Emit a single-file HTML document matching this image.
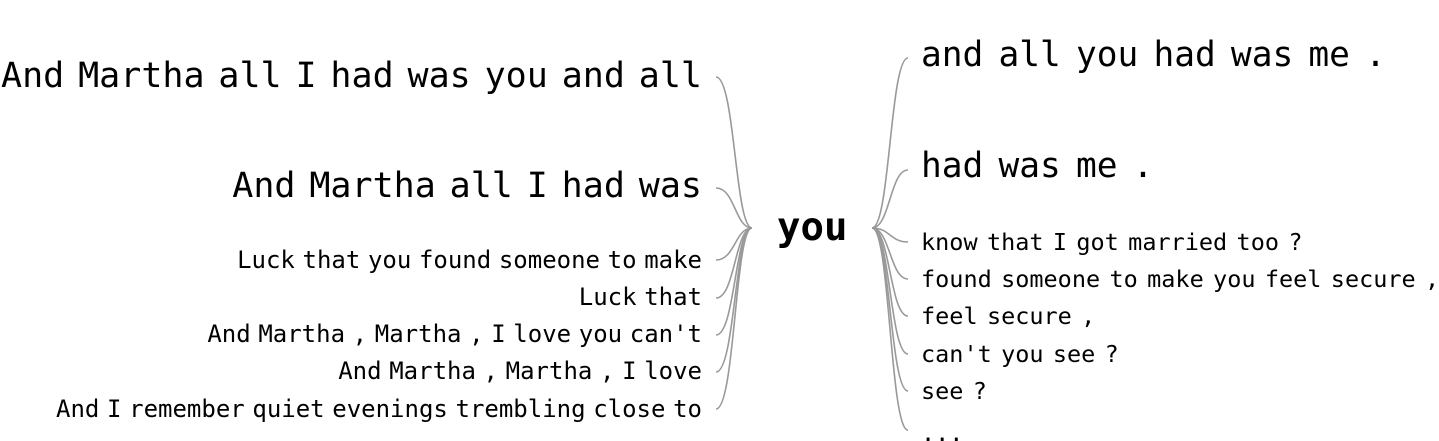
<!DOCTYPE html>
<html><head><meta charset="utf-8"><style>
html,body{margin:0;padding:0;background:#fff;width:1439px;height:441px;overflow:hidden}
svg{display:block}
text{font-family:"DejaVu Sans Mono","Liberation Mono",monospace;fill:#000}
.b{font-size:35px;word-spacing:-7.2px}
.s{font-size:24px;word-spacing:-6.8px}
.rb{font-size:34.5px;word-spacing:-5.6px}
.rs{font-size:23.5px;word-spacing:-4.8px}
path{fill:none;stroke:#999;stroke-width:1.6}
</style></head><body>
<svg width="1439" height="441" viewBox="0 0 1439 441">
<g>
<path d="M752 228 C735 228,735 77,716 77"/>
<path d="M752 228 C735 228,735 188,716 188"/>
<path d="M752 228 C735 228,735 260,716 260"/>
<path d="M752 228 C735 228,735 298,716 298"/>
<path d="M752 228 C735 228,735 335,716 335"/>
<path d="M752 228 C735 228,735 372,716 372"/>
<path d="M752 228 C735 228,735 409,716 409"/>
<path d="M872 228 C890 228,890 58,908 58"/>
<path d="M872 228 C890 228,890 170,908 170"/>
<path d="M872 228 C890 228,890 242,908 242"/>
<path d="M872 228 C890 228,890 279,908 279"/>
<path d="M872 228 C890 228,890 316,908 316"/>
<path d="M872 228 C890 228,890 354,908 354"/>
<path d="M872 228 C890 228,890 391,908 391"/>
<path d="M872 228 C890 228,890 430,908 430"/>
</g>
<g text-anchor="end">
<text x="702" y="87" class="b">And Martha all I had was you and all</text>
<text x="702" y="197" class="b">And Martha all I had was</text>
<text x="702" y="268" class="s">Luck that you found someone to make</text>
<text x="702" y="305" class="s">Luck that</text>
<text x="702" y="342" class="s">And Martha , Martha , I love you can't</text>
<text x="702" y="379" class="s">And Martha , Martha , I love</text>
<text x="702" y="417" class="s">And I remember quiet evenings trembling close to</text>
</g>
<text x="777" y="240" font-size="39" font-weight="bold">you</text>
<g>
<text x="921" y="66" class="rb">and all you had was me .</text>
<text x="921" y="177" class="rb">had was me .</text>
<text x="921" y="250" class="rs">know that I got married too ?</text>
<text x="921" y="287" class="rs">found someone to make you feel secure ,</text>
<text x="921" y="324" class="rs">feel secure ,</text>
<text x="921" y="362" class="rs">can't you see ?</text>
<text x="921" y="399" class="rs">see ?</text>
<text x="921" y="441" class="rs">...</text>
</g>
</svg>
</body></html>
